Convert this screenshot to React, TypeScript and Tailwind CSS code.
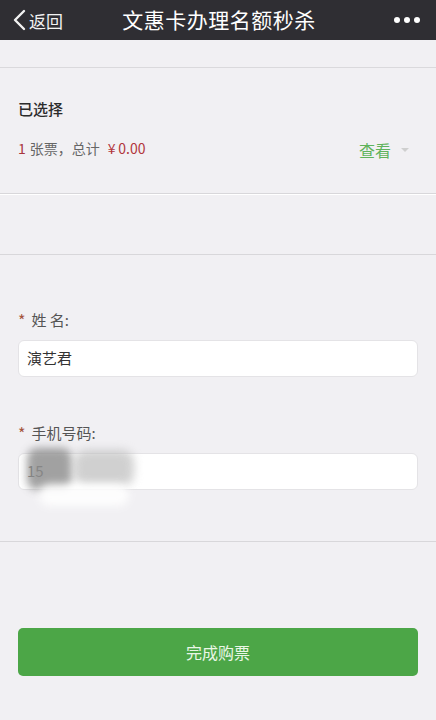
import React from "react";

const font = { fontFamily: '"Noto Sans CJK SC", "Noto Sans", sans-serif' };

export default function App() {
  return (
    <div className="w-[436px] h-[720px] bg-[#f1f0f3] overflow-hidden flex flex-col" style={font}>
      {/* header */}
      <div className="h-[40px] bg-[#2f2e33] flex items-center px-[12px] relative shrink-0">
        <div className="flex items-center text-white">
          <svg width="16" height="22" viewBox="0 0 16 22" className="mr-[1px]">
            <path d="M12 2 L3 11 L12 20" stroke="#f2f2f2" strokeWidth="2.4" fill="none" strokeLinecap="round" strokeLinejoin="round" />
          </svg>
          <span className="text-[17px] leading-none text-[#f2f2f2]">返回</span>
        </div>
        <div className="absolute left-0 right-0 top-0 h-[40px] flex items-center justify-center pointer-events-none">
          <span className="text-[21px] text-white tracking-[0.5px] ml-[2px]">文惠卡办理名额秒杀</span>
        </div>
        <div className="ml-auto flex gap-[4px] mr-[4px]">
          <span className="w-[6px] h-[6px] rounded-full bg-white"></span>
          <span className="w-[6px] h-[6px] rounded-full bg-white"></span>
          <span className="w-[6px] h-[6px] rounded-full bg-white"></span>
        </div>
      </div>

      <div className="h-[27px] shrink-0"></div>
      <div className="h-[1px] bg-[#dad9dc] shrink-0"></div>

      {/* selection */}
      <div className="px-[18px] pt-[30px] h-[125px] shrink-0">
        <div className="text-[15px] font-medium text-[#2b2b2b] leading-[22px]">已选择</div>
        <div className="flex items-center mt-[14px]">
          <span className="text-[14px] text-[#a8363b]">1</span>
          <span className="text-[14px] text-[#666] ml-[4px]">张票，总计</span>
          <span className="text-[14px] text-[#b2363c] ml-[8px]">¥&thinsp;0.00</span>
          <span className="ml-auto text-[16px] text-[#5fb35c] mt-[4px]">查看</span>
          <svg width="8" height="6" viewBox="0 0 8 6" className="ml-[10px] mr-[9px] mt-[4px]">
            <path d="M0 1 L8 1 L4 5 Z" fill="#cfcfcf" />
          </svg>
        </div>
      </div>
      <div className="h-[1px] bg-[#d8d7da] shrink-0"></div>
      <div className="h-[1px] bg-white shrink-0"></div>

      <div className="h-[59px] shrink-0"></div>
      <div className="h-[1px] bg-[#d8d7da] shrink-0"></div>

      {/* form */}
      <div className="px-[18px] pt-[54px] shrink-0 h-[286px]">
        <div className="flex items-center text-[15px] text-[#555] leading-[22px]">
          <span className="text-[#a4553e] mr-[6px] text-[16px]">*</span>
          <span>姓&nbsp;名:</span>
        </div>
        <div className="mt-[9px] h-[37px] bg-white rounded-[6px] border border-[#e4e3e6] flex items-center px-[8px] text-[15px] text-[#333]">
          演艺君
        </div>

        <div className="flex items-center text-[15px] text-[#555] leading-[22px] mt-[45px]">
          <span className="text-[#a4553e] mr-[6px] text-[16px]">*</span>
          <span>手机号码:</span>
        </div>
        <div className="relative mt-[9px] h-[37px] bg-white rounded-[6px] border border-[#e4e3e6] flex items-center px-[8px] text-[15px] text-[#777]">
          <span>15</span>
          <div className="absolute left-[8px] top-[-6px] w-[45px] h-[42px] bg-[#8a8a8a] blur-[4px] opacity-80 rounded-[10px]"></div>
          <div className="absolute left-[55px] top-[-4px] w-[60px] h-[36px] bg-[#bdbdbd] blur-[5px] opacity-70 rounded-[12px]"></div>
          <div className="absolute left-[20px] top-[30px] w-[90px] h-[22px] bg-white blur-[4px] opacity-90 rounded-full"></div>
        </div>
      </div>
      <div className="h-[1px] bg-[#d8d7da] shrink-0"></div>

      <div className="px-[18px] pt-[86px]">
        <div className="h-[48px] bg-[#4ca647] rounded-[5px] flex items-center justify-center text-[16px] text-[#eaf6e6]">
          完成购票
        </div>
      </div>
    </div>
  );
}
